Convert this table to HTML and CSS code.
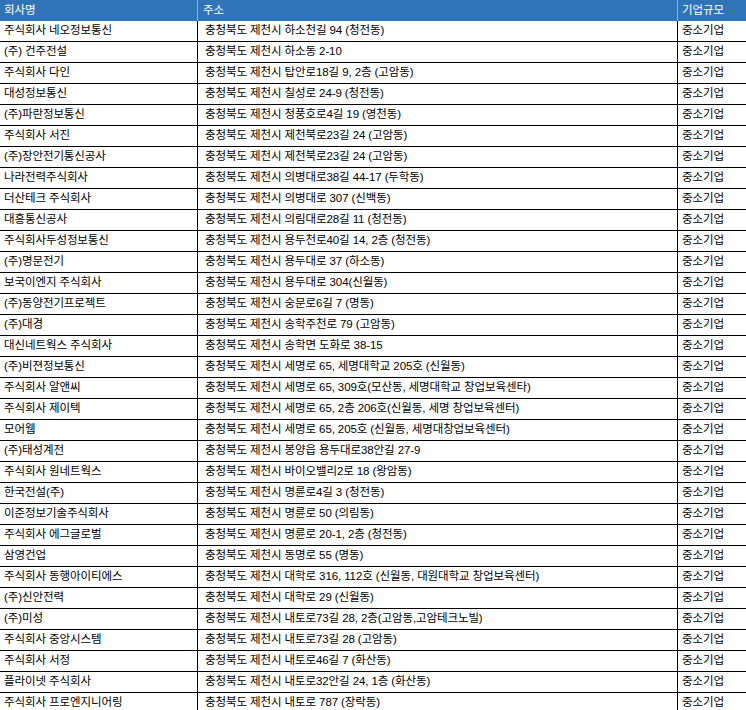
FILE: index.html
```html
<!DOCTYPE html>
<html lang="ko">
<head>
<meta charset="utf-8">
<title>기업 목록</title>
<link rel="stylesheet" href="styles.css">
</head>
<body>
<div class="sheet">
  <div class="row head"><div class="c name">회사명</div><div class="c addr">주소</div><div class="c size">기업규모</div></div>
  <div class="row"><div class="c name">주식회사 네오정보통신</div><div class="c addr">충청북도 제천시 하소천길 94 (청전동)</div><div class="c size">중소기업</div></div>
  <div class="row"><div class="c name">(주) 건주전설</div><div class="c addr">충청북도 제천시 하소동 2-10</div><div class="c size">중소기업</div></div>
  <div class="row"><div class="c name">주식회사 다인</div><div class="c addr">충청북도 제천시 탑안로18길 9, 2층 (고암동)</div><div class="c size">중소기업</div></div>
  <div class="row"><div class="c name">대성정보통신</div><div class="c addr">충청북도 제천시 칠성로 24-9 (청전동)</div><div class="c size">중소기업</div></div>
  <div class="row"><div class="c name">(주)파란정보통신</div><div class="c addr">충청북도 제천시 청풍호로4길 19 (영천동)</div><div class="c size">중소기업</div></div>
  <div class="row"><div class="c name">주식회사 서진</div><div class="c addr">충청북도 제천시 제천북로23길 24 (고암동)</div><div class="c size">중소기업</div></div>
  <div class="row"><div class="c name">(주)장안전기통신공사</div><div class="c addr">충청북도 제천시 제천북로23길 24 (고암동)</div><div class="c size">중소기업</div></div>
  <div class="row"><div class="c name">나라전력주식회사</div><div class="c addr">충청북도 제천시 의병대로38길 44-17 (두학동)</div><div class="c size">중소기업</div></div>
  <div class="row"><div class="c name">더산테크 주식회사</div><div class="c addr">충청북도 제천시 의병대로 307 (신백동)</div><div class="c size">중소기업</div></div>
  <div class="row"><div class="c name">대흥통신공사</div><div class="c addr">충청북도 제천시 의림대로28길 11 (청전동)</div><div class="c size">중소기업</div></div>
  <div class="row"><div class="c name">주식회사두성정보통신</div><div class="c addr">충청북도 제천시 용두천로40길 14, 2층 (청전동)</div><div class="c size">중소기업</div></div>
  <div class="row"><div class="c name">(주)명문전기</div><div class="c addr">충청북도 제천시 용두대로 37 (하소동)</div><div class="c size">중소기업</div></div>
  <div class="row"><div class="c name">보국이엔지 주식회사</div><div class="c addr">충청북도 제천시 용두대로 304(신월동)</div><div class="c size">중소기업</div></div>
  <div class="row"><div class="c name">(주)동양전기프로젝트</div><div class="c addr">충청북도 제천시 숭문로6길 7 (명동)</div><div class="c size">중소기업</div></div>
  <div class="row"><div class="c name">(주)대경</div><div class="c addr">충청북도 제천시 송학주천로 79 (고암동)</div><div class="c size">중소기업</div></div>
  <div class="row"><div class="c name">대신네트웍스 주식회사</div><div class="c addr">충청북도 제천시 송학면 도화로 38-15</div><div class="c size">중소기업</div></div>
  <div class="row"><div class="c name">(주)비젼정보통신</div><div class="c addr">충청북도 제천시 세명로 65, 세명대학교 205호 (신월동)</div><div class="c size">중소기업</div></div>
  <div class="row"><div class="c name">주식회사 알앤씨</div><div class="c addr">충청북도 제천시 세명로 65, 309호(모산동, 세명대학교 창업보육센타)</div><div class="c size">중소기업</div></div>
  <div class="row"><div class="c name">주식회사 제이텍</div><div class="c addr">충청북도 제천시 세명로 65, 2층 206호(신월동, 세명 창업보육센터)</div><div class="c size">중소기업</div></div>
  <div class="row"><div class="c name">모어웹</div><div class="c addr">충청북도 제천시 세명로 65, 205호 (신월동, 세명대창업보육센터)</div><div class="c size">중소기업</div></div>
  <div class="row"><div class="c name">(주)태성계전</div><div class="c addr">충청북도 제천시 봉양읍 용두대로38안길 27-9</div><div class="c size">중소기업</div></div>
  <div class="row"><div class="c name">주식회사 원네트웍스</div><div class="c addr">충청북도 제천시 바이오밸리2로 18 (왕암동)</div><div class="c size">중소기업</div></div>
  <div class="row"><div class="c name">한국전설(주)</div><div class="c addr">충청북도 제천시 명륜로4길 3 (청전동)</div><div class="c size">중소기업</div></div>
  <div class="row"><div class="c name">이준정보기술주식회사</div><div class="c addr">충청북도 제천시 명륜로 50 (의림동)</div><div class="c size">중소기업</div></div>
  <div class="row"><div class="c name">주식회사 에그글로벌</div><div class="c addr">충청북도 제천시 명륜로 20-1, 2층 (청전동)</div><div class="c size">중소기업</div></div>
  <div class="row"><div class="c name">삼영건업</div><div class="c addr">충청북도 제천시 동명로 55 (명동)</div><div class="c size">중소기업</div></div>
  <div class="row"><div class="c name">주식회사 동행아이티에스</div><div class="c addr">충청북도 제천시 대학로 316, 112호 (신월동, 대원대학교 창업보육센터)</div><div class="c size">중소기업</div></div>
  <div class="row"><div class="c name">(주)신안전력</div><div class="c addr">충청북도 제천시 대학로 29 (신월동)</div><div class="c size">중소기업</div></div>
  <div class="row"><div class="c name">(주)미성</div><div class="c addr">충청북도 제천시 내토로73길 28, 2층(고암동,고암테크노빌)</div><div class="c size">중소기업</div></div>
  <div class="row"><div class="c name">주식회사 중앙시스템</div><div class="c addr">충청북도 제천시 내토로73길 28 (고암동)</div><div class="c size">중소기업</div></div>
  <div class="row"><div class="c name">주식회사 서정</div><div class="c addr">충청북도 제천시 내토로46길 7 (화산동)</div><div class="c size">중소기업</div></div>
  <div class="row"><div class="c name">플라이넷 주식회사</div><div class="c addr">충청북도 제천시 내토로32안길 24, 1층 (화산동)</div><div class="c size">중소기업</div></div>
  <div class="row"><div class="c name">주식회사 프로엔지니어링</div><div class="c addr">충청북도 제천시 내토로 787 (장락동)</div><div class="c size">중소기업</div></div>
</div>
</body>
</html>
```

FILE: styles.css
```css
html, body {
  margin: 0;
  padding: 0;
  background: #ffffff;
  overflow: hidden;
}

.sheet {
  width: 746px;
  font-family: "Liberation Sans", "Noto Sans CJK KR", sans-serif;
  font-size: 11.5px;
  letter-spacing: -0.1px;
  color: #000000;
}

.row {
  display: grid;
  grid-template-columns: 198px 480px 1fr;
  height: 21px;
  box-sizing: border-box;
  border-bottom: 1px solid #000000;
}

.row.head {
  background: #3074b8;
  color: #ffffff;
  border-bottom: none;
  height: 21px;
}

.c {
  display: flex;
  align-items: center;
  box-sizing: border-box;
  padding-left: 4px;
  white-space: nowrap;
  overflow: hidden;
  line-height: 1;
}

.c.name,
.c.addr {
  border-right: 1px solid #000000;
}

.c.addr {
  padding-left: 7px;
}

.head .c.name,
.head .c.addr {
  border-right: 1px solid #8fb4dc;
}

.head .c.addr {
  padding-left: 5px;
}
```
